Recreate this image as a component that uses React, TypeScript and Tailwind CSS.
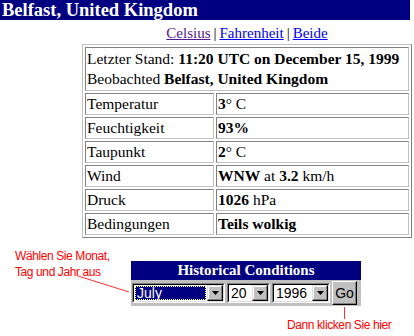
import type { ReactNode } from 'react'

const rows: { label: string; value: ReactNode }[] = [
  { label: 'Temperatur', value: <><b>3</b>° C</> },
  { label: 'Feuchtigkeit', value: <b>93%</b> },
  { label: 'Taupunkt', value: <><b>2</b>° C</> },
  { label: 'Wind', value: <><b>WNW</b> at <b>3.2</b> km/h</> },
  { label: 'Druck', value: <><b>1026</b> hPa</> },
  { label: 'Bedingungen', value: <b>Teils wolkig</b> },
]

// sunken cell of the old-style bordered table
const cell = 'border border-t-[#808080] border-l-[#808080] border-r-[#c0c0c0] border-b-[#c0c0c0] pl-[1px]'

function DropArrow() {
  return (
    <div className="flex h-[16px] w-[16px] shrink-0 items-center justify-center border border-t-[#dfdfdf] border-l-[#dfdfdf] border-r-black border-b-black bg-[#c0c0c0] shadow-[inset_-1px_-1px_0_#808080,inset_1px_1px_0_#ffffff]">
      <svg width="7" height="4" viewBox="0 0 7 4">
        <polygon points="0,0 7,0 3.5,4" fill="#000" />
      </svg>
    </div>
  )
}

function Select({ value, width, selected }: { value: string; width: string; selected?: boolean }) {
  return (
    <div className={`${width} h-[20px] border border-t-[#808080] border-l-[#808080] border-r-white border-b-white`}>
      <div className="flex h-[18px] border border-t-black border-l-black border-r-[#dfdfdf] border-b-[#dfdfdf] bg-white">
        <div className="flex min-w-0 flex-1 items-center">
          {selected ? (
            <div className="m-[1px] flex h-[14px] flex-1 items-center border border-dotted border-[#ffff80] bg-[#000080] pl-[1px] text-white">
              {value}
            </div>
          ) : (
            <span className="pl-[2px]">{value}</span>
          )}
        </div>
        <DropArrow />
      </div>
    </div>
  )
}

export default function App() {
  return (
    <div className="relative h-[336px] w-[414px] overflow-hidden bg-white font-['Liberation_Serif','Times_New_Roman',serif] text-black">
      <div className="h-[20px] w-[410px] bg-[#000080] pl-[2px] text-[18.5px] font-bold leading-[20px] text-white">
        Belfast, United Kingdom
      </div>

      <div className="ml-[82px] w-[330px]">
        <div className="flex h-[24px] items-end justify-center pb-[2px] text-[15px] leading-[18px]">
          <a className="text-[#551a8b] underline">Celsius</a>
          <span className="px-[3px]">|</span>
          <a className="text-[#0000ee] underline">Fahrenheit</a>
          <span className="px-[3px]">|</span>
          <a className="text-[#0000ee] underline">Beide</a>
        </div>

        <div className="flex flex-col gap-[2px] border border-t-[#c0c0c0] border-l-[#c0c0c0] border-r-[#808080] border-b-[#808080] p-[2px] text-[15.5px] leading-[20px]">
          <div className={`${cell} h-[44px] py-[1px]`}>
            <div className="whitespace-nowrap">
              Letzter Stand: <b>11:20 UTC on December 15, 1999</b>
            </div>
            <div className="whitespace-nowrap">
              Beobachted <b>Belfast, United Kingdom</b>
            </div>
          </div>
          {rows.map((row) => (
            <div key={row.label} className="flex gap-[2px]">
              <div className={`${cell} h-[22px] w-[129px] shrink-0`}>{row.label}</div>
              <div className={`${cell} h-[22px] flex-1 whitespace-nowrap`}>{row.value}</div>
            </div>
          ))}
        </div>
      </div>

      <div className="ml-[131px] mt-[23px] w-[230px]">
        <div className="h-[19px] bg-[#000080] text-center text-[15px] font-bold leading-[19px] text-white">
          Historical Conditions
        </div>
        <div className="flex h-[26px] items-center gap-[2px] bg-[#c0c0c0] pl-[1px] font-['Liberation_Sans',Arial,sans-serif] text-[14px]">
          <Select value="July" width="w-[93px]" selected />
          <Select value="20" width="w-[43px]" />
          <Select value="1996" width="w-[58px]" />
          <div className="flex h-[24px] w-[25px] items-center justify-center border border-t-white border-l-white border-r-black border-b-black text-[14px] shadow-[inset_-1px_-1px_0_#808080]">
            Go
          </div>
        </div>
      </div>

      {/* red call-outs over the form */}
      <svg className="pointer-events-none absolute inset-0" width="414" height="336">
        <line x1="78" y1="276" x2="129" y2="292" stroke="#ff3030" strokeWidth="1" />
        <line x1="344.5" y1="307" x2="344.5" y2="319" stroke="#ff3030" strokeWidth="1" />
      </svg>
      <div className="absolute left-[15px] top-[248px] font-['Liberation_Sans',Arial,sans-serif] text-[12px] leading-[16px] tracking-[-0.4px] text-[#ff0000]">
        Wählen Sie Monat,
        <br />
        Tag und Jahr aus
      </div>
      <div className="absolute left-[287px] top-[318px] font-['Liberation_Sans',Arial,sans-serif] text-[12px] leading-[14px] tracking-[-0.4px] text-[#ff0000]">
        Dann klicken Sie hier
      </div>
    </div>
  )
}
